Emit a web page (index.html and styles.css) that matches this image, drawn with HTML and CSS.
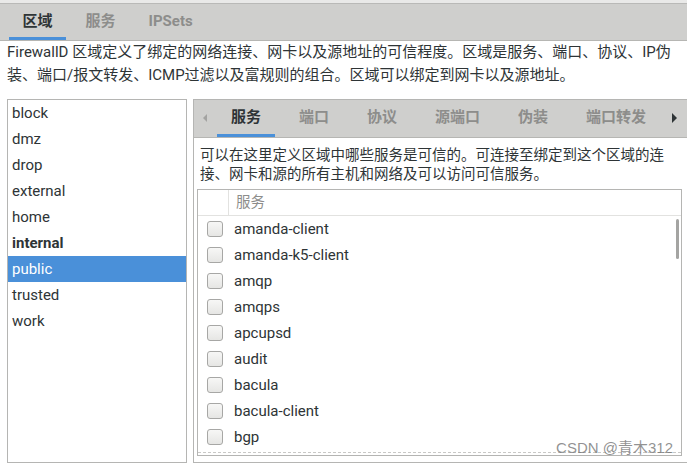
FILE: index.html
```html
<!DOCTYPE html>
<html lang="zh-CN">
<head>
<meta charset="utf-8">
<title>firewall-config</title>
<link rel="stylesheet" href="styles.css">
</head>
<body>
<div class="app">
  <div class="topbar">
    <div class="tab active">区域</div>
    <div class="tab">服务</div>
    <div class="tab">IPSets</div>
  </div>
  <p class="desc">FirewallD 区域定义了绑定的网络连接、网卡以及源地址的可信程度。区域是服务、端口、协议、IP伪<br>装、端口/报文转发、ICMP过滤以及富规则的组合。区域可以绑定到网卡以及源地址。</p>
  <div class="main">
    <ul class="zones">
      <li>block</li>
      <li>dmz</li>
      <li>drop</li>
      <li>external</li>
      <li>home</li>
      <li class="bold">internal</li>
      <li class="selected">public</li>
      <li>trusted</li>
      <li>work</li>
    </ul>
    <div class="panel">
      <div class="subtabs">
        <div class="arrow left"></div>
        <div class="stab active">服务</div>
        <div class="stab">端口</div>
        <div class="stab">协议</div>
        <div class="stab">源端口</div>
        <div class="stab">伪装</div>
        <div class="stab">端口转发</div>
        <div class="arrow right"></div>
      </div>
      <p class="subdesc">可以在这里定义区域中哪些服务是可信的。可连接至绑定到这个区域的连<br>接、网卡和源的所有主机和网络及可以访问可信服务。</p>
      <div class="services">
        <div class="head">
          <div class="hcheck"></div>
          <div class="hname">服务</div>
        </div>
        <div class="rows">
          <div class="row"><span class="cb"></span>amanda-client</div>
          <div class="row"><span class="cb"></span>amanda-k5-client</div>
          <div class="row"><span class="cb"></span>amqp</div>
          <div class="row"><span class="cb"></span>amqps</div>
          <div class="row"><span class="cb"></span>apcupsd</div>
          <div class="row"><span class="cb"></span>audit</div>
          <div class="row"><span class="cb"></span>bacula</div>
          <div class="row"><span class="cb"></span>bacula-client</div>
          <div class="row"><span class="cb"></span>bgp</div>
          <div class="scrollbar"></div>
        </div>
      </div>
    </div>
  </div>
  <div class="watermark">CSDN @青木312</div>
</div>
</body>
</html>
```

FILE: styles.css
```css
* { box-sizing: border-box; }
html, body { margin: 0; padding: 0; background: #fff; }
body {
  font-family: Roboto, "Noto Sans CJK SC", sans-serif;
  font-size: 15px;
  color: #2e3436;
  width: 687px;
  height: 465px;
  overflow: hidden;
}
.app { position: relative; height: 465px; }

.topbar {
  display: flex;
  height: 41px;
  padding-left: 6px;
  background: #cfcfcd;
  border-top: 3px solid #e9e9e8;
  border-bottom: 1px solid #b6b6b3;
  box-shadow: inset 0 1px 0 #b9b9b7;
}
.tab {
  margin: 0 3px;
  padding: 0 13.5px;
  font-weight: bold;
  color: #8d8d8b;
  line-height: 34px;
  padding-top: 1px;
  border-bottom: 3px solid transparent;
  white-space: nowrap;
}
.tab.active { color: #2e3436; border-bottom-color: #4a90d9; }

.desc {
  margin: 0;
  padding: 0 0 0 7px;
  line-height: 23px;
  height: 58px;
  white-space: nowrap;
}

.main {
  display: flex;
  gap: 6px;
  padding-left: 7px;
  height: 364px;
}

.zones {
  list-style: none;
  margin: 0;
  padding: 0;
  width: 180px;
  flex-shrink: 0;
  border: 1px solid #b5b5b3;
}
.zones li {
  height: 26px;
  line-height: 26px;
  padding-left: 4px;
}
.zones li.bold { font-weight: bold; }
.zones li.selected { background: #4a90d9; color: #fff; }

.panel {
  flex: 1;
  display: flex;
  flex-direction: column;
  border: 1px solid #b5b5b3;
  border-right: none;
  min-width: 0;
}
.subtabs {
  display: flex;
  flex-shrink: 0;
  height: 38px;
  background: #cfcfcd;
  border-bottom: 1px solid #b6b6b3;
  overflow: hidden;
  white-space: nowrap;
}
.arrow { width: 18px; flex-shrink: 0; position: relative; }
.arrow.left::after {
  content: "";
  position: absolute;
  left: 9px; top: 14px;
  border-style: solid;
  border-width: 4px 4px 4px 0;
  border-color: transparent #a3a3a1 transparent transparent;
}
.arrow.right { margin-left: auto; width: 22px; }
.arrow.right::after {
  content: "";
  position: absolute;
  left: 7px; top: 13px;
  border-style: solid;
  border-width: 5px 0 5px 5px;
  border-color: transparent transparent transparent #2e3436;
}
.stab {
  flex-shrink: 0;
  margin: 0 5px;
  padding: 0 14px;
  font-weight: bold;
  color: #8d8d8b;
  line-height: 34px;
  border-bottom: 3px solid transparent;
  font-size: 15px;
}
.stab.active { color: #2e3436; border-bottom-color: #4a90d9; }

.subdesc {
  flex-shrink: 0;
  margin: 0;
  padding: 8px 0 0 6px;
  font-size: 14.5px;
  line-height: 19px;
  height: 51px;
  white-space: nowrap;
}

.services {
  margin: 0 5px 6px 3px;
  flex: 1;
  border: 1px solid #b5b5b3;
  display: flex;
  flex-direction: column;
  min-height: 0;
}
.head {
  display: flex;
  flex-shrink: 0;
  height: 26px;
  border-bottom: 1px solid #e2e2e0;
}
.hcheck { width: 31px; border-right: 1px solid #e2e2e0; }
.hname {
  padding-left: 7px;
  color: #8d8d8b;
  line-height: 25px;
  font-size: 14.5px;
}
.rows {
  position: relative;
  flex: 1;
  overflow: hidden;
  border-bottom: 1px dashed #c8c8c6;
  margin-bottom: 2px;
}
.row {
  display: flex;
  align-items: center;
  height: 26px;
  padding-left: 9px;
}
.cb {
  width: 16px;
  height: 16px;
  margin-right: 11px;
  border: 1px solid #a7a7a5;
  border-radius: 3px;
  background: linear-gradient(#f7f7f6, #e6e6e4);
}
.scrollbar {
  position: absolute;
  right: 2px;
  top: 3px;
  width: 3px;
  height: 40px;
  border-radius: 2px;
  background: #a4a4a2;
}
.watermark {
  position: absolute;
  right: 14px;
  bottom: 8px;
  font-family: "Liberation Sans", "Noto Sans CJK SC", sans-serif;
  font-size: 15px;
  color: rgba(110, 110, 110, 0.75);
}
```
